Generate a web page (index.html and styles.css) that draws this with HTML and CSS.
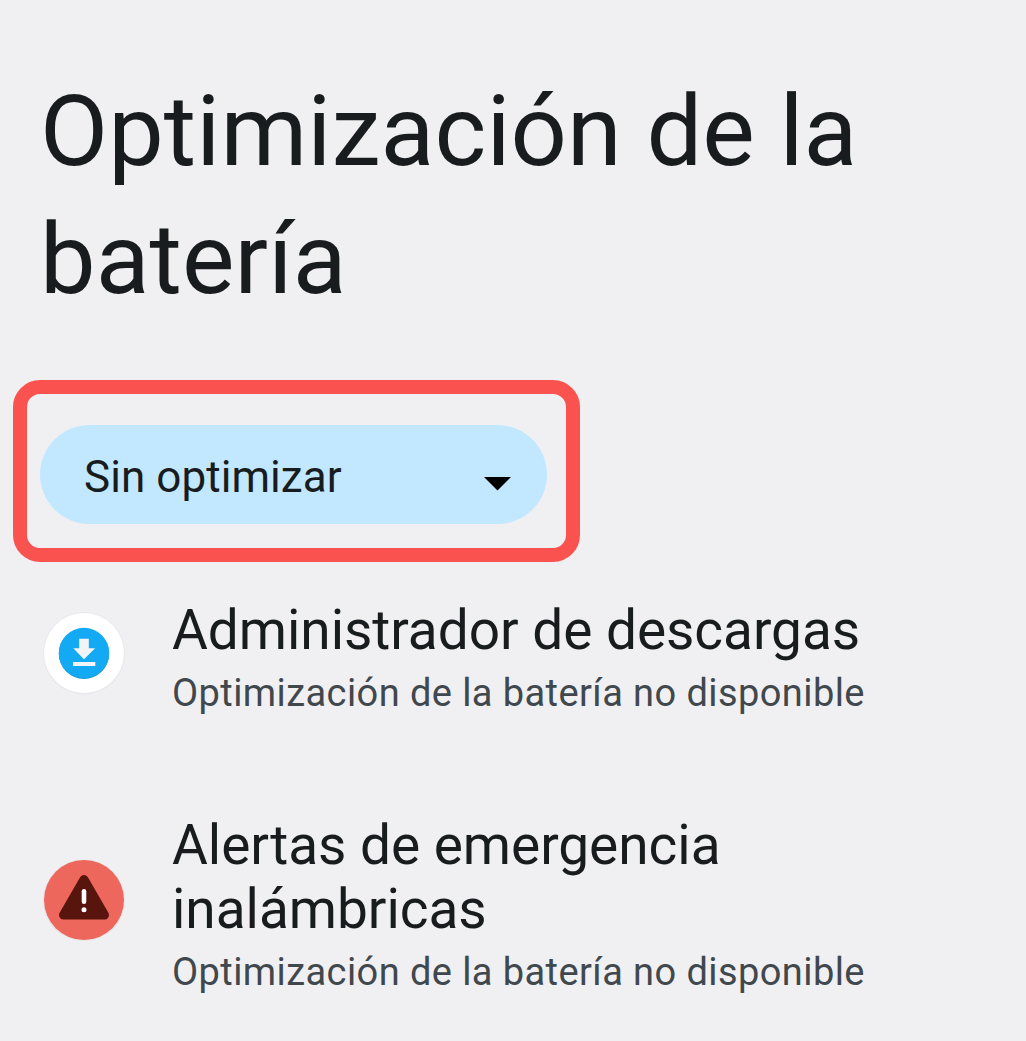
FILE: index.html
```html
<!DOCTYPE html>
<html lang="es">
<head>
<meta charset="utf-8">
<title>Optimización de la batería</title>
<link rel="stylesheet" href="styles.css">
</head>
<body>
<main class="screen">
  <h1 class="title"><span class="line">Optimización de la</span> <span class="line">batería</span></h1>
  <div class="highlight">
    <button class="filter" type="button">
      <span class="filter-label">Sin optimizar</span>
      <svg class="caret" width="27" height="14" viewBox="0 0 27 14"><path d="M0 0h27L13.5 13.5z" fill="#000"/></svg>
    </button>
  </div>
  <ul class="apps">
    <li class="app app-downloads">
      <svg class="icon" width="84" height="84" viewBox="0 0 84 84">
        <circle cx="42" cy="42.3" r="41.2" fill="#e8e9eb"/>
        <circle cx="42" cy="42" r="40" fill="#fff"/>
        <circle cx="42" cy="42.7" r="25.2" fill="#1593d1"/>
        <circle cx="42" cy="42" r="25.2" fill="#14aaf3"/>
        <path d="M37.2 27.7h9.6v9.6h6.3L42 48.3 31.3 37.3h5.9zM31 51h22.3v4H31z" fill="#f3f4f5"/>
      </svg>
      <div class="app-text">
        <h2 class="app-name"><span class="line">Administrador de descargas</span></h2>
        <p class="app-status">Optimización de la batería no disponible</p>
      </div>
    </li>
    <li class="app app-alerts">
      <svg class="icon" width="84" height="84" viewBox="0 0 84 84">
        <circle cx="42" cy="42.2" r="41" fill="#e9e5e6"/>
        <circle cx="42" cy="42" r="40" fill="#ee675c"/>
        <path d="M42 21.6L62.5 57H21.5z" fill="#57150d" stroke="#57150d" stroke-width="9" stroke-linejoin="round"/>
        <path d="M42 33.2v10.6" stroke="#fff" stroke-width="4.6" stroke-linecap="round"/>
        <circle cx="42" cy="51.8" r="2.5" fill="#fff"/>
      </svg>
      <div class="app-text">
        <h2 class="app-name"><span class="line">Alertas de emergencia</span> <span class="line">inalámbricas</span></h2>
        <p class="app-status">Optimización de la batería no disponible</p>
      </div>
    </li>
  </ul>
</main>
</body>
</html>
```
FILE: styles.css
```css
* { box-sizing: border-box; }
body { margin: 0; background: #f0f0f3; color: #191c1e; font-family: Roboto, "Noto Sans", sans-serif; }
.screen { width: 1026px; height: 1041px; padding-top: 67px; overflow: hidden; }
.title { margin: 0 0 0 40px; font-size: 99px; font-weight: 400; line-height: 128px; letter-spacing: 0.06px; }
.line { display: block; white-space: nowrap; }
.highlight { width: 567px; height: 182px; margin: 57px 0 0 13px; padding: 31px 0 0 13px; border: 14px solid #fa534f; border-radius: 27px; }
.filter { display: flex; align-items: center; justify-content: space-between; width: 507px; height: 99px; padding: 0 36px 0 44px; border: 0; border-radius: 50px; background: #c2e8ff; color: #191c1e; font: 400 44px Roboto, sans-serif; letter-spacing: 0.06px; }
.filter-label { padding-top: 4px; }
.caret { display: block; margin-top: 19px; }
.apps { margin: 36px 0 0; padding: 0; list-style: none; }
.app { display: flex; align-items: center; gap: 46px; padding-left: 42px; }
.app-alerts { margin-top: 96px; }
.icon { flex: none; margin-bottom: 10px; }
.app-name { margin: 0; font-size: 55px; font-weight: 400; line-height: 64px; letter-spacing: -0.04px; }
.app-status { margin: 7px 0 0; font-size: 38px; line-height: 48px; letter-spacing: 0.42px; color: #41484d; white-space: nowrap; }
```
